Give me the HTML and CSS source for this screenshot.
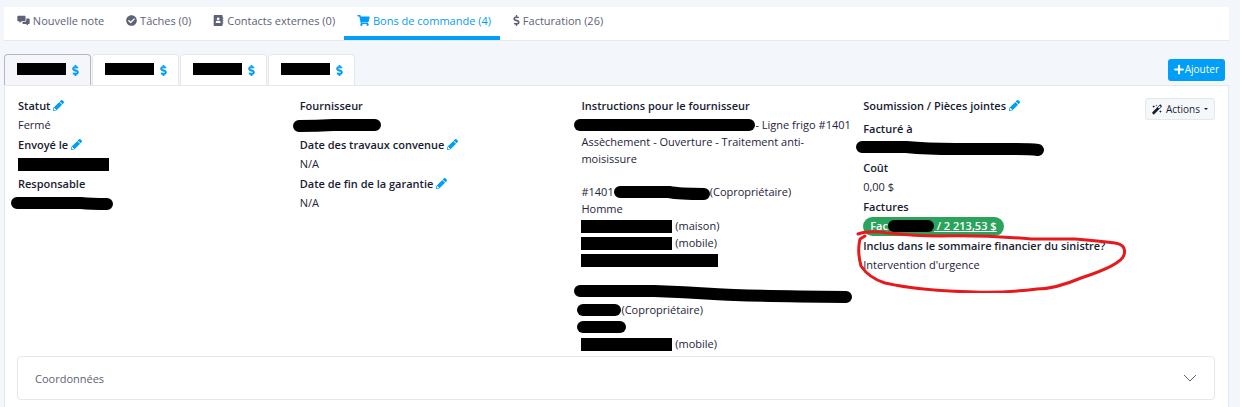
FILE: index.html
```html
<!DOCTYPE html>
<html lang="fr">
<head>
    <meta charset="UTF-8">
    <meta name="viewport" content="width=device-width, initial-scale=1.0">
    <title>Bons de commande</title>
    <link rel="stylesheet" href="styles.css">
</head>
<body>
    <!-- Icons -->
    <svg class="sprite" aria-hidden="true">
        <symbol id="i-comments" viewBox="0 0 576 512">
            <path d="M48 32h288c26 0 48 22 48 48v160c0 26-22 48-48 48H208l-96 72c-8 6-16 2-16-8v-64H48c-26 0-48-22-48-48V80c0-26 22-48 48-48z"/>
            <path d="M416 160h112c26 0 48 22 48 48v160c0 26-22 48-48 48h-32v56c0 10-9 14-16 8l-86-64H288c-26 0-48-22-48-48v-30l-4-18h100c44 0 80-36 80-80z"/>
        </symbol>
        <symbol id="i-check" viewBox="0 0 512 512">
            <path d="M504 256c0 136.967-111.033 248-248 248S8 392.967 8 256 119.033 8 256 8s248 111.033 248 248zM227.314 387.314l184-184c6.248-6.248 6.248-16.379 0-22.627l-22.627-22.627c-6.248-6.249-16.379-6.249-22.628 0L216 308.118l-70.059-70.059c-6.248-6.248-16.379-6.248-22.628 0l-22.627 22.627c-6.248 6.248-6.248 16.379 0 22.627l104 104c6.249 6.249 16.379 6.249 22.628.001z"/>
        </symbol>
        <symbol id="i-book" viewBox="0 0 448 512">
            <path fill-rule="evenodd" d="M48 0h320c26 0 48 22 48 48v64h20c7 0 12 5 12 12v40c0 7-5 12-12 12h-20v48h20c7 0 12 5 12 12v40c0 7-5 12-12 12h-20v48h20c7 0 12 5 12 12v40c0 7-5 12-12 12h-20v64c0 26-22 48-48 48H48c-26 0-48-22-48-48V48C0 22 22 0 48 0zM208 112a64 64 0 1 0 0 128 64 64 0 1 0 0-128zM96 368h224v-30c0-38-30-68-68-68h-88c-38 0-68 30-68 68z"/>
        </symbol>
        <symbol id="i-cart" viewBox="0 0 576 512">
            <path d="M528.12 301.319l47.273-208C578.806 78.301 567.391 64 551.99 64H159.208l-9.166-44.81C147.758 8.021 137.93 0 126.529 0H24C10.745 0 0 10.745 0 24v16c0 13.255 10.745 24 24 24h69.883l70.248 343.435C147.325 417.1 136 435.222 136 456c0 30.928 25.072 56 56 56s56-25.072 56-56c0-15.674-6.447-29.835-16.824-40h209.647C430.447 426.165 424 440.326 424 456c0 30.928 25.072 56 56 56s56-25.072 56-56c0-22.172-12.888-41.332-31.579-50.405l5.517-24.276c3.413-15.018-8.002-29.319-23.403-29.319H218.117l-6.545-32h293.145c11.206 0 20.92-7.754 23.403-18.681z"/>
        </symbol>
        <symbol id="i-dollar" viewBox="0 0 288 512">
            <path d="M209.2 233.4l-108-31.6C88.7 198.2 80 186.5 80 173.5c0-16.3 13.2-29.5 29.5-29.5h66.3c12.2 0 24.2 3.7 34.2 10.5 6.1 4.1 14.3 3.1 19.5-2l34.8-34c7.1-6.9 6.1-18.4-1.8-24.5C238 74.8 207.4 64.1 176 64V16c0-8.8-7.2-16-16-16h-32c-8.8 0-16 7.2-16 16v48h-2.5C45.8 64-5.4 118.7.5 183.6c4.2 46.1 39.4 83.6 83.8 96.6l102.5 30c12.5 3.7 21.2 15.3 21.2 28.3 0 16.3-13.2 29.5-29.5 29.5h-66.3C100 368 88 364.3 78 357.5c-6.1-4.1-14.3-3.1-19.5 2l-34.8 34c-7.1 6.9-6.1 18.4 1.8 24.5 24.5 19.2 55.1 29.9 86.5 30v48c0 8.8 7.2 16 16 16h32c8.8 0 16-7.2 16-16v-48.2c46.6-.9 90.3-28.6 105.7-72.7 21.5-61.6-14.6-124.8-72.5-141.7z"/>
        </symbol>
        <symbol id="i-pencil" viewBox="0 0 512 512">
            <path d="M497.9 142.1l-46.1 46.1c-4.7 4.7-12.3 4.7-17 0l-111-111c-4.7-4.7-4.7-12.3 0-17l46.1-46.1c18.7-18.7 49.1-18.7 67.9 0l60.1 60.1c18.8 18.7 18.8 49.1 0 67.9zM284.2 99.8L21.6 362.4.4 483.9c-2.9 16.4 11.4 30.6 27.8 27.8l121.5-21.3 262.6-262.6c4.7-4.7 4.7-12.3 0-17l-111-111c-4.8-4.7-12.4-4.7-17.1 0zM88 424h48v36.3l-64.5 11.3-31.1-31.1L51.7 376H88v48z"/>
        </symbol>
        <symbol id="i-plus" viewBox="0 0 448 512">
            <path d="M416 208H272V64c0-17.67-14.33-32-32-32h-32c-17.67 0-32 14.33-32 32v144H32c-17.67 0-32 14.33-32 32v32c0 17.67 14.33 32 32 32h144v144c0 17.67 14.33 32 32 32h32c17.67 0 32-14.33 32-32V304h144c17.67 0 32-14.33 32-32v-32c0-17.67-14.33-32-32-32z"/>
        </symbol>
        <symbol id="i-magic" viewBox="0 0 512 512">
            <path fill-rule="evenodd" d="M18 398L398 18c16-16 40-16 56 0l40 40c16 16 16 40 0 56L114 494c-16 16-40 16-56 0l-40-40c-16-16-16-40 0-56zM360 200l88-80-56-56-88 80z"/>
            <path d="M224 0l14 34 34 14-34 14-14 34-14-34-34-14 34-14zM88 32l22 50 50 22-50 22-22 50-22-50-50-22 50-22zM432 288l22 50 50 22-50 22-22 50-22-50-50-22 50-22z"/>
        </symbol>
    </svg>

    <nav class="main-nav">
        <a href="#notes"><svg class="icon wide"><use href="#i-comments"/></svg> Nouvelle note</a>
        <a href="#taches"><svg class="icon"><use href="#i-check"/></svg> Tâches (0)</a>
        <a href="#contacts"><svg class="icon"><use href="#i-book"/></svg> Contacts externes (0)</a>
        <a href="#bons" class="active"><svg class="icon wide"><use href="#i-cart"/></svg> Bons de commande (4)</a>
        <a href="#facturation"><svg class="icon narrow"><use href="#i-dollar"/></svg> Facturation (26)</a>
    </nav>

    <div class="order-bar">
        <div class="order-tabs">
            <a href="#bon-1" class="active"><span class="box"></span><svg class="icon narrow"><use href="#i-dollar"/></svg></a>
            <a href="#bon-2"><span class="box"></span><svg class="icon narrow"><use href="#i-dollar"/></svg></a>
            <a href="#bon-3"><span class="box"></span><svg class="icon narrow"><use href="#i-dollar"/></svg></a>
            <a href="#bon-4"><span class="box"></span><svg class="icon narrow"><use href="#i-dollar"/></svg></a>
        </div>
        <button type="button" class="btn btn-primary"><svg class="icon"><use href="#i-plus"/></svg>Ajouter</button>
    </div>

    <main class="card">
        <div class="details">
            <dl>
                <dt>Statut <a href="#statut" aria-label="Modifier le statut"><svg class="icon"><use href="#i-pencil"/></svg></a></dt>
                <dd>Fermé</dd>
                <dt>Envoyé le <a href="#envoye" aria-label="Modifier la date d'envoi"><svg class="icon"><use href="#i-pencil"/></svg></a></dt>
                <dd><span class="box box-md"></span></dd>
                <dt>Responsable</dt>
                <dd><svg class="marker" width="102" height="13"><path d="M6 6H70Q80 7 96 7"/></svg></dd>
            </dl>

            <dl>
                <dt>Fournisseur</dt>
                <dd><svg class="marker" width="88" height="13"><path d="M6 7Q24 7 40 6H82"/></svg></dd>
                <dt>Date des travaux convenue <a href="#travaux" aria-label="Modifier la date des travaux"><svg class="icon"><use href="#i-pencil"/></svg></a></dt>
                <dd>N/A</dd>
                <dt>Date de fin de la garantie <a href="#garantie" aria-label="Modifier la fin de la garantie"><svg class="icon"><use href="#i-pencil"/></svg></a></dt>
                <dd>N/A</dd>
            </dl>

            <div class="instructions">
                <h2>Instructions pour le fournisseur</h2>
                <p>
                    <svg class="marker" width="181" height="13"><path d="M6 6H175"/></svg>- Ligne frigo #1401<br>
                    Assèchement - Ouverture - Traitement anti-moisissure
                </p>
                <p>
                    #1401<svg class="marker inline" width="96" height="14"><path d="M6 6H55Q65 8 90 8"/></svg>(Copropriétaire)<br>
                    Homme<br>
                    <span class="box box-md"></span> (maison)<br>
                    <span class="box box-md"></span> (mobile)<br>
                    <span class="box box-lg"></span>
                </p>
                <p>
                    <svg class="marker" width="280" height="18"><path d="M6 6H80Q110 7 140 9T272 12"/></svg><br>
                    <svg class="marker short" width="44" height="13"><path d="M6 6H38"/></svg>(Copropriétaire)<br>
                    <svg class="marker short" width="49" height="13"><path d="M6 6H43"/></svg><br>
                    <span class="box box-md"></span> (mobile)
                </p>
            </div>

            <dl>
                <dt class="alone">Soumission / Pièces jointes <a href="#pieces" aria-label="Modifier les pièces jointes"><svg class="icon"><use href="#i-pencil"/></svg></a></dt>
                <dt>Facturé à</dt>
                <dd><svg class="marker" width="190" height="15"><path d="M6 6H50Q70 8 100 8H160Q175 8 182 9"/></svg></dd>
                <dt>Coût</dt>
                <dd>0,00 $</dd>
                <dt>Factures</dt>
                <dd><a href="#facture" class="badge">Fac<svg class="marker inline" width="46" height="13"><path d="M6 6H40"/></svg> / 2 213,53 $</a></dd>
                <dt class="circled">Inclus dans le sommaire financier du sinistre?
                    <svg class="circle" width="272" height="64" viewBox="0 0 272 64">
                        <path d="M3 5Q14 1 34 4Q60 7 84 7Q130 6 176 10H220Q244 12 260 14Q272 16 269 26Q266 36 226 49Q200 60 182 60Q150 64 120 63Q66 62 30 54Q14 49 6 37Q2 22 5 10L10 7"/>
                    </svg>
                </dt>
                <dd>Intervention d'urgence</dd>
            </dl>

            <button type="button" class="btn btn-light"><svg class="icon"><use href="#i-magic"/></svg>Actions<span class="caret"></span></button>
        </div>

        <button type="button" class="accordion" aria-expanded="false">
            Coordonnées
            <svg class="chevron" viewBox="0 0 14 8"><path d="M1 1l6 6 6-6"/></svg>
        </button>
    </main>
</body>
</html>
```

FILE: styles.css
```css
* {
    margin: 0;
    padding: 0;
    box-sizing: border-box;
}

body {
    font-family: 'Open Sans', 'Noto Sans', sans-serif;
    font-size: 11px;
    line-height: 17px;
    font-weight: 400;
    color: #24243c;
    background: #f3f7fb;
    min-height: 100vh;
    padding: 7px 11px 0 4px;
    display: flex;
    flex-direction: column;
}

a {
    color: #009ef7;
    text-decoration: none;
}

button {
    font: inherit;
    cursor: pointer;
}

.sprite {
    position: absolute;
    width: 0;
    height: 0;
}

.icon {
    width: 11px;
    height: 11px;
    fill: currentColor;
    vertical-align: -1px;
}

.icon.wide {
    width: 13px;
}

.icon.narrow {
    width: 7px;
}

/* Top navigation */
.main-nav {
    display: flex;
    background: #fff;
    border-bottom: 1px solid #e4e8ec;
}

.main-nav a {
    padding: 5px 9px 7px 13px;
    border-bottom: 4px solid transparent;
    color: #5e6278;
}

.main-nav a.active {
    color: #009ef7;
    border-bottom-color: #009ef7;
}

/* Order tabs */
.order-bar {
    display: flex;
    justify-content: space-between;
    align-items: center;
    padding: 13px 4px 0 0;
}

.order-tabs {
    display: flex;
    gap: 1px;
}

.order-tabs a {
    display: flex;
    align-items: center;
    gap: 6px;
    height: 31px;
    padding: 0 11px 0 12px;
    background: #fff;
    border: 1px solid #e4e8ec;
    border-bottom: 0;
    border-radius: 4px 4px 0 0;
}

.order-tabs a.active {
    background: #f5f6fa;
    border-color: #b5b5c3;
}

.order-tabs .box {
    margin-bottom: 3px;
}

.order-tabs .icon {
    stroke: currentColor;
    stroke-width: 20;
}

.btn {
    display: flex;
    align-items: center;
    height: 22px;
    border-radius: 3px;
    font-size: 10px;
    white-space: nowrap;
}

.btn .icon {
    width: 10px;
}

.btn-primary {
    gap: 1px;
    padding: 0 6px;
    font-weight: 500;
    color: #fff;
    background: #009ef7;
    border: 0;
}

.btn-light {
    gap: 4px;
    padding: 0 6px;
    color: #181c32;
    background: #f5f8fa;
    border: 1px solid #e4e8ec;
}

.caret {
    border: 2px solid transparent;
    border-top-color: currentColor;
    border-bottom: 0;
}

/* Order details */
.card {
    flex: 1;
    padding: 12px 13px 6px 12px;
    background: #fff;
    border: 1px solid #e4e8ec;
    border-bottom: 0;
}

.details {
    display: grid;
    grid-template-columns: repeat(4, minmax(0, 1fr)) auto;
    align-items: start;
    margin-bottom: 4px;
    padding-left: 1px;
}

.details dl,
.instructions {
    margin-top: -1px;
    padding-right: 12px;
}

.details dt,
.details h2 {
    font-size: 11px;
    line-height: 17px;
    font-weight: 600;
    color: #181c32;
    white-space: nowrap;
}

.details dt {
    height: 19px;
}

.details dt.alone {
    height: 23px;
}

.details dd {
    height: 20px;
}

.instructions h2 {
    margin-bottom: 2px;
}

.instructions p + p {
    margin-top: 16px;
}

.badge {
    display: inline-block;
    height: 19px;
    padding: 0 7px;
    border-radius: 10px;
    font-weight: 600;
    color: #fff;
    background: #2aa35c;
    text-decoration: underline;
}

/* Hidden values */
.box {
    display: inline-block;
    width: 49px;
    height: 12px;
    background: #000;
    vertical-align: middle;
}

.box-md {
    width: 91px;
    height: 13px;
}

.box-lg {
    width: 137px;
    height: 13px;
}

.details .box,
.marker {
    margin-top: -3px;
    margin-bottom: -2px;
}

.marker {
    margin-left: -7px;
    vertical-align: middle;
    fill: none;
    stroke: #000;
    stroke-width: 12;
    stroke-linecap: round;
}

.marker.short {
    margin-left: -4px;
}

.marker.inline {
    margin-left: 0;
}

.circled {
    position: relative;
}

.circle {
    position: absolute;
    top: -8px;
    left: -8px;
    fill: none;
    stroke: #e8191c;
    stroke-width: 3;
    stroke-linecap: round;
    stroke-linejoin: round;
}

.accordion {
    display: flex;
    justify-content: space-between;
    align-items: center;
    width: 100%;
    height: 44px;
    padding: 0 17px;
    color: #5e6278;
    background: #fff;
    border: 1px solid #e4e8ec;
    border-radius: 4px;
}

.chevron {
    width: 14px;
    height: 8px;
    fill: none;
    stroke: #5e6278;
}
```
